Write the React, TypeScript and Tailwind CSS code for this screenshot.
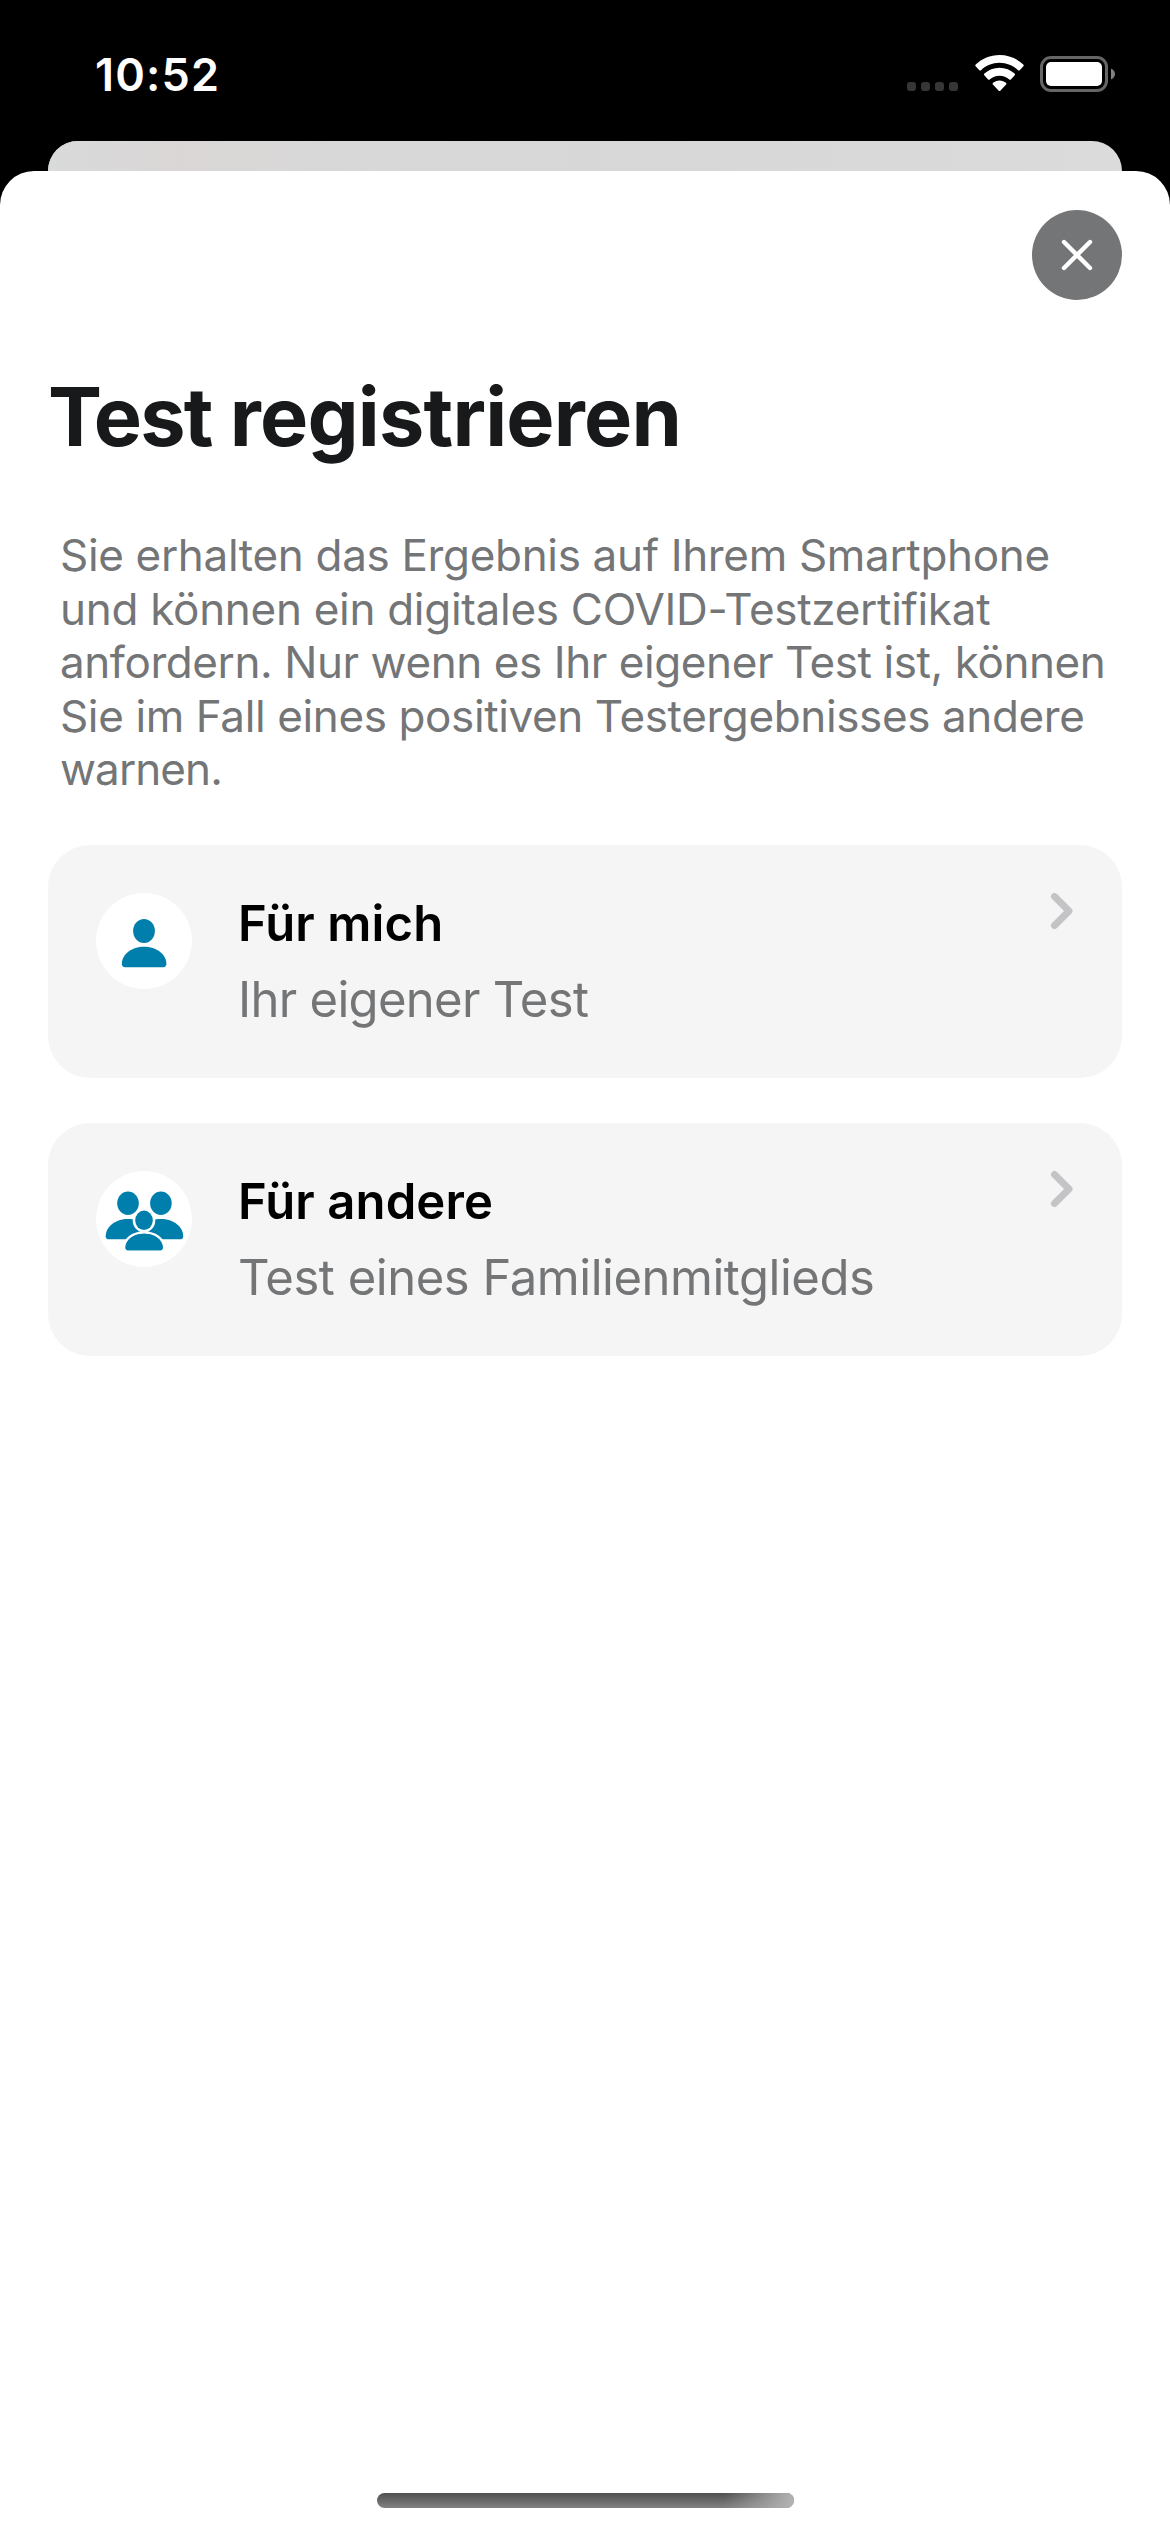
import type { ReactNode } from "react";

function WifiIcon() {
  return (
    <svg className="ml-[17px] mt-[55px] h-[36px] w-[49px] shrink-0" viewBox="0 0 49 36" fill="#fff">
      <path d="M24.5 0C33.7 0 42.1 3.6 48.3 9.5c.5.5.5 1.2.1 1.7l-3.7 4c-.4.5-1.2.5-1.7 0C38.1 10.500 31.600 7.700 24.500 7.700S10.900 10.500 6 15.200c-.5.5-1.3.5-1.700 0l-3.700-4c-.4-.5-.4-1.200.1-1.700C6.900 3.600 15.300 0 24.500 0Z" />
      <path d="M24.500 12.700c5.800 0 11.100 2.200 15.100 5.900.5.5.5 1.200.1 1.700l-3.800 4.100c-.4.400-1.100.5-1.600 0-2.600-2.300-6-3.700-9.800-3.700s-7.200 1.400-9.800 3.700c-.5.5-1.200.4-1.600 0l-3.800-4.100c-.4-.5-.4-1.200.1-1.700 4-3.700 9.300-5.900 15.100-5.900Z" />
      <path d="M24.500 25.400c2.500 0 4.800.9 6.500 2.400.5.5.5 1.100.1 1.600l-5.800 6.300c-.4.400-1.200.4-1.600 0l-5.800-6.300c-.4-.5-.4-1.100.1-1.600 1.700-1.500 4-2.400 6.500-2.400Z" />
    </svg>
  );
}

function BatteryIcon() {
  return (
    <svg className="ml-[16px] mt-[56px] h-[36px] w-[75px] shrink-0" viewBox="0 0 75 36">
      <rect x="1.500" y="1.500" width="65" height="33" rx="9.500" fill="none" stroke="#666" strokeWidth="3" />
      <rect x="6" y="6" width="56" height="24" rx="5" fill="#fff" />
      <path d="M71 12.500c2.400.9 4 3 4 5.500s-1.600 4.600-4 5.500Z" fill="#808080" />
    </svg>
  );
}

function StatusBar() {
  return (
    <div className="flex h-[141px] shrink-0 items-start pl-[95px] text-white">
      <div className="mt-[48px] w-[812px] shrink-0 text-[45px] font-semibold leading-[54px] tracking-[1.15px]">
        10:52
      </div>
      <div className="mt-[82px] flex shrink-0 gap-[5px]">
        {[0, 1, 2, 3].map((i) => (
          <span key={i} className="size-[9px] rounded-[3px] bg-[#363636]" />
        ))}
      </div>
      <WifiIcon />
      <BatteryIcon />
    </div>
  );
}

function PersonIcon() {
  return (
    <svg className="size-24" viewBox="0 0 96 96" fill="#007fad">
      <ellipse cx="48" cy="38" rx="10.900" ry="12" />
      <path d="M48.100 53.800c12.400 0 22.300 7.500 22.300 17.300 0 2-1.100 3.100-3.200 3.100H29c-2.100 0-3.200-1.100-3.200-3.100 0-9.800 9.900-17.300 22.300-17.300Z" />
    </svg>
  );
}

function FamilyIcon() {
  return (
    <svg className="size-24" viewBox="0 0 96 96" fill="#007fad">
      <ellipse cx="32" cy="32.200" rx="10.800" ry="11.700" />
      <ellipse cx="64.900" cy="32.200" rx="10.800" ry="11.700" />
      <path d="M32 48c12.400 0 22.300 7.500 22.300 17.200 0 2-1.100 3.100-3.200 3.100H12.900c-2.100 0-3.200-1.100-3.200-3.100C9.700 55.500 19.600 48 32 48Z" />
      <path d="M64.900 48c12.400 0 22.300 7.500 22.300 17.200 0 2-1.100 3.100-3.200 3.100H45.800c-2.100 0-3.200-1.100-3.200-3.100C42.600 55.500 52.500 48 64.900 48Z" />
      <g stroke="#fff" strokeWidth="5" paintOrder="stroke">
        <path d="M48.100 62.700c10.600 0 18.700 6.100 18.700 13.800 0 1.900-1 2.800-2.900 2.800H32.400c-1.900 0-2.900-.9-2.900-2.800 0-7.700 8.100-13.800 18.600-13.800Z" />
        <ellipse cx="48" cy="49.300" rx="8.800" ry="9.700" />
      </g>
      <path d="M48.100 62.700c10.600 0 18.700 6.100 18.700 13.800 0 1.900-1 2.800-2.900 2.800H32.400c-1.900 0-2.900-.9-2.900-2.800 0-7.700 8.100-13.800 18.600-13.800Z" />
    </svg>
  );
}

function OptionCard({ icon, title, subtitle }: { icon: ReactNode; title: ReactNode; subtitle: ReactNode }) {
  return (
    <button type="button" className="flex h-[233px] items-start rounded-[42px] bg-[#f5f5f5] pl-12 pr-[49px] pt-12 text-left">
      <span className="size-24 shrink-0 rounded-full bg-white">{icon}</span>
      <span className="ml-[46px] mt-px flex flex-1 flex-col gap-4 whitespace-nowrap text-[49px] leading-[60px]">
        <span className="font-semibold text-black">{title}</span>
        <span className="text-[#747577]">{subtitle}</span>
      </span>
      <svg className="h-[36px] w-[23px] shrink-0" viewBox="0 0 23 36" fill="none">
        <path d="M4.500 3.500 19 18 4.500 32.500" stroke="#c4c4c6" strokeWidth="7" strokeLinecap="round" strokeLinejoin="round" />
      </svg>
    </button>
  );
}

export default function App() {
  return (
    <div className="flex h-[2532px] w-[1170px] flex-col overflow-hidden bg-black font-['Inter',sans-serif]">
      <StatusBar />
      <div className="mx-12 h-[30px] shrink-0 rounded-t-[30px] bg-linear-to-r from-[#dadada] via-[#d7d7d7] to-[#dbdbdb]">
        <div className="h-full rounded-t-[30px] bg-linear-to-r from-[#d9dada] from-0% via-[#dad6d6] via-12% to-transparent to-30%" />
      </div>
      <main className="flex flex-1 flex-col rounded-t-[34px] bg-white px-12 pt-[39px]">
        <button type="button" aria-label="Schließen" className="flex size-[90px] items-center justify-center self-end rounded-full bg-[#747577]">
          <svg className="size-[32px]" viewBox="0 0 32 32" fill="none">
            <path d="M3 3 29 29M29 3 3 29" stroke="#fff" strokeWidth="4.400" strokeLinecap="round" />
          </svg>
        </button>
        <h1 className="mt-[67px] whitespace-nowrap text-[81px] font-bold leading-[100px] tracking-[-0.8px] text-[#17191a]">
          <span className="tracking-[-1.9px]">Test</span> registrieren
        </h1>
        <p className="ml-3 mt-[62px] whitespace-nowrap text-[44px] leading-[53.6px] text-[#747577]">
          <span className="block tracking-[-0.33px]">Sie erhalten das Ergebnis auf Ihrem Smartphone</span>
          <span className="block tracking-[-0.29px]">und können ein digitales COVID-Testzertifikat</span>
          <span className="block tracking-[-0.42px]">anfordern. Nur wenn es Ihr eigener Test ist, können</span>
          <span className="block tracking-[-0.38px]">Sie im Fall eines positiven Testergebnisses andere</span>
          <span className="block tracking-[-0.9px]">warnen.</span>
        </p>
        <div className="mt-12 flex flex-col gap-[45px]">
          <OptionCard
            icon={<PersonIcon />}
            title={<span className="tracking-[0.1px]">Für mich</span>}
            subtitle={<span className="tracking-[-0.7px]">Ihr eigener Test</span>}
          />
          <OptionCard
            icon={<FamilyIcon />}
            title={<span className="tracking-[0.1px]">Für andere</span>}
            subtitle={<span className="tracking-[-0.47px]">Test eines Familienmitglieds</span>}
          />
        </div>
        <div className="mb-[24px] mt-auto h-[15px] w-[417px] self-center overflow-hidden rounded-full bg-linear-to-b from-[#505050] to-[#828282]">
          <div className="ml-auto h-full w-[70px] bg-linear-to-r from-transparent to-[#b4b4b4]" />
        </div>
      </main>
    </div>
  );
}
